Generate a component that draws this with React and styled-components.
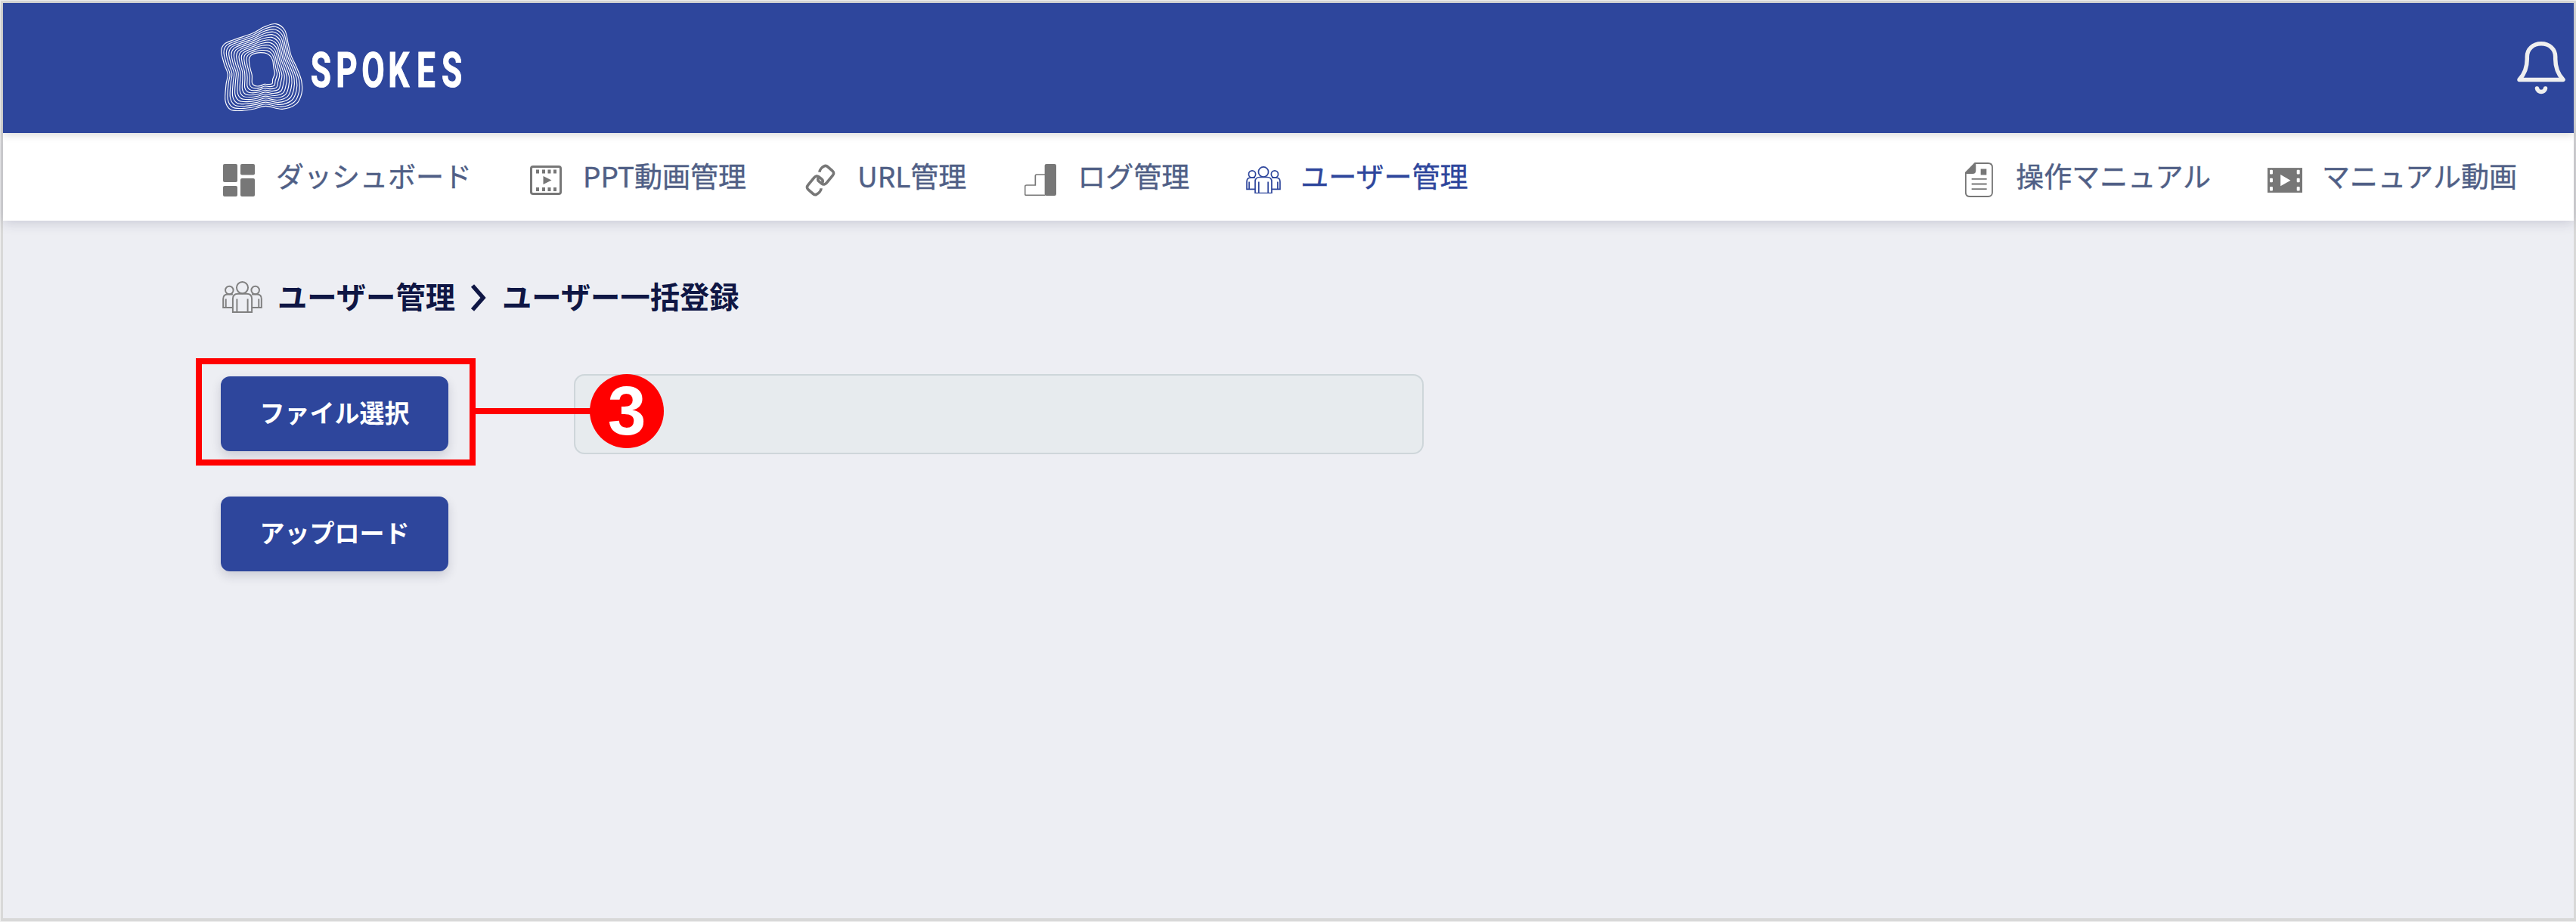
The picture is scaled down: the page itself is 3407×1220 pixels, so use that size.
import styled, { createGlobalStyle } from "styled-components"

const GlobalStyle = createGlobalStyle`
    * {
        box-sizing: border-box;
    }
    body {
        margin: 0;
        font-family: "Noto Sans CJK JP", "Noto Sans", sans-serif;
    }
`;

const Frame = styled.div`
    height: 1220px;
    border: 1px solid #eeeeee;
    border-right: 0;
    background: #d8d8d8;
    padding: 3px 3px 4px 3px;
`;
const Page = styled.div`
    height: 100%;
    display: flex;
    flex-direction: column;
    background: #edeef3;
`;
const Header = styled.header`
    height: 172px;
    flex: none;
    display: flex;
    align-items: center;
    justify-content: space-between;
    padding: 0 11px 0 286px;
    background: #2e469c;
    box-shadow: 0 3px 10px rgba(0, 0, 0, 0.14);
    z-index: 2;
`;
const Nav = styled.nav`
    height: 116px;
    flex: none;
    display: flex;
    justify-content: space-between;
    padding: 0 75px 0 288px;
    background: #ffffff;
    box-shadow: 0 2px 16px rgba(40, 40, 80, 0.2);
    z-index: 1;
`;
const NavGroup = styled.div`
    display: flex;
    gap: 74px;
`;
const NavItem = styled.a`
    display: flex;
    align-items: center;
    gap: 25px;
    font-size: 37px;
    line-height: 1;
    white-space: nowrap;
    color: ${(props) => (props.$active ? "#2e469c" : "#505f86")};
`;
const NavIcon = styled.span`
    width: 48px;
    height: 48px;
    margin-top: 8px;
    display: flex;
    align-items: center;
    justify-content: center;
    color: ${(props) => (props.$active ? "#2e469c" : "#777777")};
`;
const NavLabel = styled.span`
    padding-bottom: 3px;
    -webkit-text-stroke: 0.4px currentColor;
`;
const Main = styled.main`
    flex: 1;
    padding: 71px 0 0 288px;
`;
const Breadcrumb = styled.h1`
    height: 60px;
    margin: 0;
    display: flex;
    align-items: center;
    font-size: 39.3px;
    font-weight: 700;
    line-height: 1;
    color: #0f1644;
`;
const CrumbIcon = styled.span`
    display: flex;
    margin: 0 20px 0 2px;
    color: #808080;
`;
const CrumbArrow = styled.svg`
    margin: 2px 20px 0 20px;
`;
const CrumbLabel = styled.span`
    padding-bottom: 4px;
`;
const FileRow = styled.div`
    display: flex;
    align-items: center;
    gap: 166px;
    margin-top: 72px;
`;
const ButtonSlot = styled.div`
    position: relative;
    display: flex;
    margin-bottom: 1px;
`;
const Button = styled.button`
    width: 301px;
    height: 99px;
    border: 0;
    border-radius: 12px;
    padding: 0 0 4px;
    background: #2e469c;
    box-shadow: 0 6px 14px rgba(30, 30, 60, 0.16);
    color: #ffffff;
    font-family: inherit;
    font-size: 33px;
    font-weight: 700;
    line-height: 1;
`;
const FileName = styled.div`
    width: 1124px;
    height: 106px;
    border: 2px solid #ced6da;
    border-radius: 14px;
    background: #e7ebee;
`;
const UploadRow = styled.div`
    display: flex;
    margin-top: 56px;
`;
// Red callout drawn over the file button
const Callout = styled.div`
    position: absolute;
    top: -24px;
    left: -33px;
    width: 370px;
    height: 142px;
    border: 8px solid #ff0000;
`;
const CalloutLine = styled.div`
    position: absolute;
    top: 42px;
    left: 337px;
    width: 155px;
    height: 8px;
    background: #ff0000;
`;
const CalloutBadge = styled.div`
    position: absolute;
    top: -3px;
    left: 488px;
    width: 98px;
    height: 98px;
    border-radius: 50%;
    background: #ff0000;
    color: #ffffff;
    font: 700 91px/98px "Liberation Sans", Arial, sans-serif;
    text-align: center;
`;

// Outer blob and inner head silhouette, point for point
const OUTER = [
    [68, 175], [80, 145], [120, 127], [190, 103], [240, 76], [285, 65], [320, 90], [334, 145],
    [345, 190], [368, 240], [386, 290], [387, 340], [365, 383], [310, 403], [245, 391], [200, 402],
    [150, 409], [105, 405], [84, 370], [87, 305], [94, 265], [80, 225],
];
const INNER = [
    [178, 205], [182, 195], [190, 187], [205, 181], [225, 179], [248, 182], [264, 194], [272, 210],
    [274, 222], [276, 240], [280, 262], [272, 285], [270, 302], [255, 305], [240, 304], [225, 310],
    [210, 312], [197, 308], [190, 298], [190, 270], [185, 250], [180, 228],
];
const RINGS = 12;

const ring = (t) => {
    const pts = OUTER.map(([x, y], i) => [x + (INNER[i][0] - x) * t, y + (INNER[i][1] - y) * t]);
    const n = pts.length;
    let d = `M${pts[0]}`;
    for (let i = 0; i < n; i++) {
        const [a, b, c, e] = [pts[(i + n - 1) % n], pts[i], pts[(i + 1) % n], pts[(i + 2) % n]];
        d += `C${b[0] + (c[0] - a[0]) / 6},${b[1] + (c[1] - a[1]) / 6} ${c[0] - (e[0] - b[0]) / 6},${c[1] - (e[1] - b[1]) / 6} ${c}`;
    }
    return d + "Z";
};

const LogoText = styled.text`
    font-family: Roboto, sans-serif;
    font-size: 65px;
    font-weight: 700;
    fill: #ffffff;
    stroke: #ffffff;
    stroke-width: 1px;
`;

const Logo = () => (
    <svg width="330" height="120" viewBox="290 30 330 120">
        <g transform="translate(270 10) scale(0.33333)" fill="none" stroke="#ffffff" strokeWidth="3.4">
            {Array.from({ length: RINGS }, (_, i) => (
                <path key={i} d={ring(i / (RINGS - 1))} />
            ))}
        </g>
        <g transform="translate(411 115) scale(0.68 1)">
            <LogoText x="-0.5 48.8 99 150.5 206 254.5">SPOKES</LogoText>
        </g>
    </svg>
);

const BellIcon = () => (
    <svg width="64" height="72" viewBox="49 54 64 72" fill="none" stroke="#efefef" strokeWidth="5.5" strokeLinecap="round" strokeLinejoin="round">
        <path d="M52 105.5C59 98 62.3 88 62.3 78V75C62.3 65 70 57.8 81 57.8S99.7 65 99.7 75V78C99.7 88 103 98 110 105.5Z" />
        <path d="M75.5 117C76.5 123 85.5 123 86.5 117" />
    </svg>
);

const DashboardIcon = () => (
    <svg width="42" height="43" fill="currentColor">
        <rect width="19" height="24" rx="2" />
        <rect x="23" width="19" height="14.5" rx="2" />
        <rect y="29" width="19" height="14" rx="2" />
        <rect x="23" y="19" width="19" height="24" rx="2" />
    </svg>
);

const SlideIcon = () => (
    <svg width="42" height="39" fill="currentColor">
        <rect x="1.5" y="1.5" width="39" height="36" rx="2.5" fill="none" stroke="currentColor" strokeWidth="3" />
        {[8, 16, 23.5, 31].map((x) => (
            <g key={x}>
                <rect x={x} y="5.5" width="4" height="5" />
                <rect x={x} y="29" width="4" height="5" />
            </g>
        ))}
        <path d="M17.5 14 28.5 19.5 17.5 25Z" />
    </svg>
);

const LinkIcon = () => {
    const half = "M98 84C98 74 108 64 116 60C121 57 126 58 131 63L149 79C155 84 155 91 150 97L126 126C120 133 113 135 106 129L96 121C91 117 90 111 94 105";
    return (
        <svg width="42" height="43" viewBox="38 52 126 128" fill="none" stroke="currentColor" strokeWidth="11">
            <path d={half} />
            <path d={half} transform="rotate(180 101 116)" />
        </svg>
    );
};

const LogIcon = () => (
    <svg width="42" height="42" viewBox="0 0 126 126">
        <rect x="80" width="46" height="126" rx="7" fill="currentColor" />
        <path d="M82 42H48Q43 42 43 47V84H8Q2 84 2 90V119Q2 124 7 124H82" fill="none" stroke="currentColor" strokeWidth="5" />
    </svg>
);

const UsersIcon = ({ width }) => (
    <svg width={width} height={width * 0.8} viewBox="0 0 46 37" fill="none" stroke="currentColor" strokeWidth="1.7">
        <circle cx="8" cy="10.5" r="4.6" />
        <path d="M12 30.5H.9V20.5Q.9 15.2 6 15.2H12M4 20.5V30.5" />
        <g transform="matrix(-1 0 0 1 46 0)">
            <circle cx="8" cy="10.5" r="4.6" />
            <path d="M12 30.5H.9V20.5Q.9 15.2 6 15.2H12M4 20.5V30.5" />
        </g>
        <circle cx="23" cy="7.5" r="6.6" />
        <path d="M12 35.7V20.5Q12 14.6 18 14.6H28Q34 14.6 34 20.5V35.7ZM16.8 20.5V35.5M29.2 20.5V35.5" />
    </svg>
);

const ManualIcon = () => (
    <svg width="37" height="46" viewBox="0 0 111 137" fill="none" stroke="currentColor" strokeWidth="5.5">
        <path d="M40 2.5H91Q108 2.5 108 19V118Q108 134.5 91 134.5H19Q2.5 134.5 2.5 118V40Z" />
        <path d="M40 2.5V32Q40 42 30 42H2.5Z" fill="currentColor" />
        <path d="M26 65H86M26 85H86M26 105H86" />
        <rect x="62" y="25" width="23" height="24" fill="currentColor" stroke="none" />
    </svg>
);

const MovieIcon = () => (
    <svg width="46" height="33" viewBox="0 0 139 99">
        <rect width="139" height="99" fill="currentColor" />
        <g fill="#ffffff">
            {[8, 41, 75].map((y) => (
                <g key={y}>
                    <rect x="9" y={y} width="12" height="17" rx="3" />
                    <rect x="117" y={y} width="12" height="17" rx="3" />
                </g>
            ))}
            <path d="M52 27 92 50 52 73Z" />
        </g>
    </svg>
);

const leftMenu = [
    { label: "ダッシュボード", icon: <DashboardIcon /> },
    { label: "PPT動画管理", icon: <SlideIcon /> },
    { label: "URL管理", icon: <LinkIcon /> },
    { label: "ログ管理", icon: <LogIcon /> },
    { label: "ユーザー管理", icon: <UsersIcon width={46} />, active: true },
];
const rightMenu = [
    { label: "操作マニュアル", icon: <ManualIcon /> },
    { label: "マニュアル動画", icon: <MovieIcon /> },
];

const Menu = ({ items }) => (
    <NavGroup>
        {items.map((item) => (
            <NavItem key={item.label} $active={item.active}>
                <NavIcon $active={item.active}>{item.icon}</NavIcon>
                <NavLabel>{item.label}</NavLabel>
            </NavItem>
        ))}
    </NavGroup>
);

const App = () => {
    return (
        <>
            <GlobalStyle />
            <Frame>
                <Page>
                    <Header>
                        <Logo />
                        <BellIcon />
                    </Header>
                    <Nav>
                        <Menu items={leftMenu} />
                        <Menu items={rightMenu} />
                    </Nav>
                    <Main>
                        <Breadcrumb>
                            <CrumbIcon><UsersIcon width={53} /></CrumbIcon>
                            <CrumbLabel>ユーザー管理</CrumbLabel>
                            <CrumbArrow width="22" height="36" viewBox="0 0 22 36" fill="none" stroke="currentColor" strokeWidth="5.5">
                                <path d="M3 2 17 18 3 34" />
                            </CrumbArrow>
                            <CrumbLabel>ユーザー一括登録</CrumbLabel>
                        </Breadcrumb>
                        <FileRow>
                            <ButtonSlot>
                                <Button>ファイル選択</Button>
                                <Callout />
                                <CalloutLine />
                                <CalloutBadge>3</CalloutBadge>
                            </ButtonSlot>
                            <FileName />
                        </FileRow>
                        <UploadRow>
                            <Button>アップロード</Button>
                        </UploadRow>
                    </Main>
                </Page>
            </Frame>
        </>
    )
}

export default App;
